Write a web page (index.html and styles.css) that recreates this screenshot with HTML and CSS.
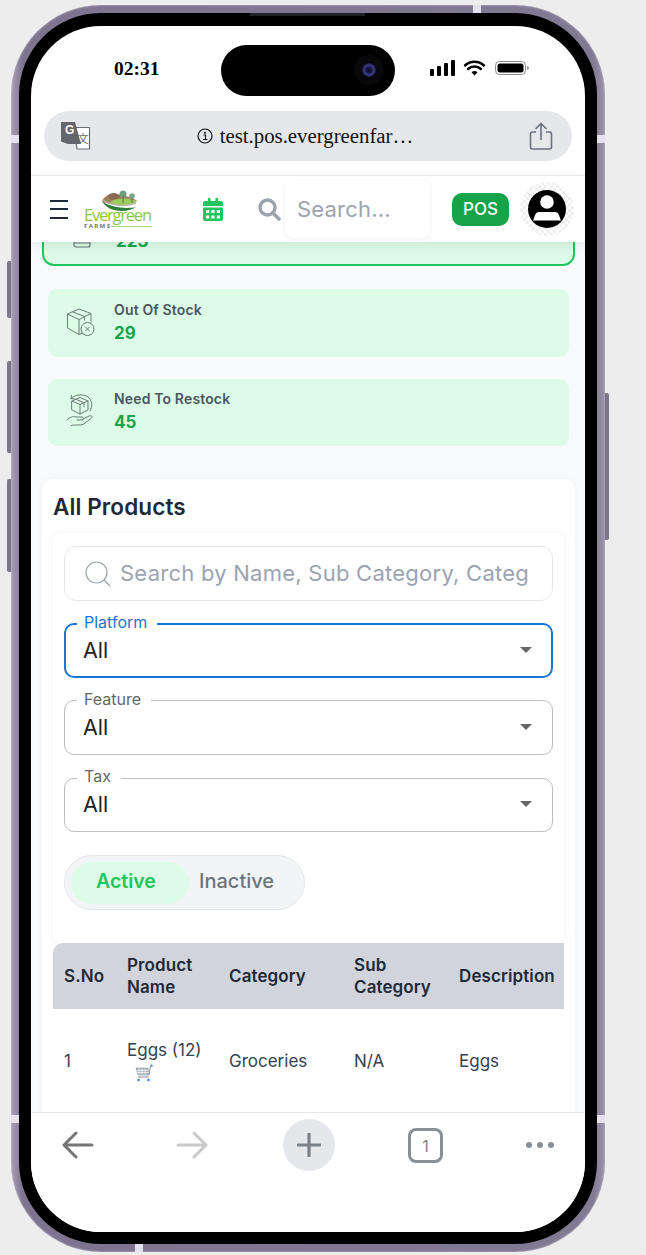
FILE: index.html
```html
<!DOCTYPE html>
<html lang="en">
<head>
    <meta charset="UTF-8">
    <title>All Products</title>
    <link rel="stylesheet" href="styles.css">
</head>
<body>
    <div class="phone">
        <span class="side-btn side-btn-a"></span>
        <span class="side-btn side-btn-b"></span>
        <span class="side-btn side-btn-c"></span>
        <span class="side-btn side-btn-d"></span>
        <span class="notch notch-lt"></span>
        <span class="notch notch-rt"></span>
        <span class="notch notch-lb"></span>
        <span class="notch notch-rb"></span>
        <span class="notch notch-top"></span>
        <span class="notch notch-bottom"></span>
        <div class="bezel">
            <span class="speaker"></span>
            <div class="screen">
                <div class="status-bar">
                    <span class="time">02:31</span>
                    <div class="island"><span class="camera"></span></div>
                    <svg class="status-icons" width="100" height="18" viewBox="0 0 100 18">
                        <rect x="0" y="10" width="4" height="7" rx="1" fill="#000"/>
                        <rect x="7" y="7" width="4" height="10" rx="1" fill="#000"/>
                        <rect x="14" y="4" width="4" height="13" rx="1" fill="#000"/>
                        <rect x="21" y="1" width="4" height="16" rx="1" fill="#000"/>
                        <path d="M35 6.500a14 14 0 0 1 19 0M38 10a9.500 9.500 0 0 1 13 0" fill="none" stroke="#000" stroke-width="2.400" stroke-linecap="round"/>
                        <path d="M41.500 13.200a4.600 4.600 0 0 1 6 0L44.500 16.500z" fill="#000"/>
                        <rect x="65.500" y="2.500" width="30" height="13" rx="4" fill="#fff" stroke="#8b8b8b"/>
                        <rect x="67.500" y="4.500" width="26" height="9" rx="2.500" fill="#000"/>
                        <path d="M97 7a2 2 0 0 1 0 4z" fill="#999"/>
                    </svg>
                </div>

                <div class="url-bar">
                    <svg class="translate-icon" width="30" height="28" viewBox="0 0 30 28">
                        <path d="M13 5.500h15.500V27H16z" fill="#fff" stroke="#6b6e74" stroke-width="1.200"/>
                        <path d="M0 0h14l6 22H7l-7-2.500z" fill="#63666b"/>
                        <text x="4" y="12" class="translate-g">G</text>
                        <text x="16.500" y="21" class="translate-zh">文</text>
                    </svg>
                    <div class="url-text">
                        <svg width="16" height="16" viewBox="0 0 16 16">
                            <circle cx="8" cy="8" r="7" fill="none" stroke="#111" stroke-width="1.200"/>
                            <path d="M6.500 7h2v4.500M6 11.500h4.500" fill="none" stroke="#111" stroke-width="1.200"/>
                            <circle cx="8" cy="4.700" r="1" fill="#111"/>
                        </svg>
                        <span>test.pos.evergreenfar…</span>
                    </div>
                    <svg class="share-icon" width="24" height="28" viewBox="0 0 24 28">
                        <path d="M7 10H3.500A2 2 0 0 0 1.500 12v13a2 2 0 0 0 2 2h17a2 2 0 0 0 2-2V12a2 2 0 0 0-2-2H17" fill="none" stroke="#6b7280" stroke-width="1.600"/>
                        <path d="M12 18V1.500M6.500 7L12 1.500 17.500 7" fill="none" stroke="#6b7280" stroke-width="1.600"/>
                    </svg>
                </div>

                <header class="topbar">
                    <div class="burger"><span></span><span></span><span></span></div>
                    <svg class="logo" width="70" height="40" viewBox="0 0 70 40">
                        <path d="M18 11C20 6 27 3 33 4c6 1 15 3 20 7-5 5-30 5-35 0z" fill="#a5805f"/>
                        <path d="M23 6c3-3 7-4 10-2l4 4-10 2z" fill="#8a6a52"/>
                        <path d="M26 12c8-5 18-4 27-1-6 5-21 6-27 1z" fill="#9ccb5c"/>
                        <path d="M18 11c3 6 10 10 20 10 6 0 11-2 14-4-8 2-26 1-34-6z" fill="#2f7d3a"/>
                        <path d="M19 10c8 6 24 7 33 3" fill="none" stroke="#b9b4aa" stroke-width="1.500"/>
                        <circle cx="39" cy="4" r="3.500" fill="#6f9c80"/>
                        <circle cx="48" cy="6" r="2.800" fill="#7aa88a"/>
                        <path d="M39 6v7M48 8v5" stroke="#5d6d4c"/>
                        <text x="0" y="31" class="logo-name" textLength="68">Evergreen</text>
                        <text x="0" y="37.500" class="logo-farms">FARMS</text>
                        <path d="M27 36.500h41" stroke="#a9d77c" stroke-width="1"/>
                    </svg>
                    <svg class="calendar" width="20" height="23" viewBox="0 0 20 23">
                        <path d="M5 0h2.500v3h5V0H15v3h3a2 2 0 0 1 2 2v3H0V5a2 2 0 0 1 2-2h3zM0 9.500h20V21a2 2 0 0 1-2 2H2a2 2 0 0 1-2-2z" fill="#22c55e"/>
                        <g fill="#fff">
                            <rect x="3" y="12" width="3.200" height="3"/><rect x="8.400" y="12" width="3.200" height="3"/><rect x="13.800" y="12" width="3.200" height="3"/>
                            <rect x="3" y="17.500" width="3.200" height="3"/><rect x="8.400" y="17.500" width="3.200" height="3"/><rect x="13.800" y="17.500" width="3.200" height="3"/>
                        </g>
                    </svg>
                    <svg class="search-glyph" width="23" height="23" viewBox="0 0 23 23">
                        <circle cx="9.500" cy="9.500" r="7.500" fill="none" stroke="#9ca3af" stroke-width="3.400"/>
                        <path d="M15 15l6 6" stroke="#9ca3af" stroke-width="3.600" stroke-linecap="round"/>
                    </svg>
                    <div class="top-search">Search...</div>
                    <button class="pos-btn">POS</button>
                    <div class="avatar">
                        <svg width="38" height="38" viewBox="0 0 38 38">
                            <circle cx="19" cy="19" r="19" fill="#000"/>
                            <circle cx="19" cy="12" r="6.800" fill="#fff"/>
                            <path d="M11 22h16c2 0 3 1 4 3l2 6H5l2-6c1-2 2-3 4-3z" fill="#fff"/>
                            <path d="M5 31h28" stroke="#000" stroke-width="1"/>
                        </svg>
                    </div>
                </header>

                <main class="content">
                    <div class="stat stat-selected">
                        <svg class="stat-icon" width="30" height="40" viewBox="0 0 30 40">
                            <rect x="6" y="17" width="16" height="20" rx="2" fill="none" stroke="#6b7280" stroke-width="1.200"/>
                            <path d="M6 33h16" stroke="#6b7280" stroke-width="1.200"/>
                        </svg>
                        <div class="stat-text">
                            <div class="stat-label">Total</div>
                            <div class="stat-value">223</div>
                        </div>
                    </div>
                    <div class="stat">
                        <svg class="stat-icon" width="30" height="30" viewBox="0 0 30 30">
                            <g fill="none" stroke="#6b7a74" stroke-width="1" stroke-linejoin="round">
                                <path d="M1.500 7L13 2l12 4.500v9M1.500 7v14L13 27.500l4-1.500M1.500 7L13 12.500 25 6.500M13 12.500v15M6.500 4.800l12 4.700v4"/>
                                <circle cx="21.500" cy="22" r="6.500"/>
                                <path d="M19.300 19.800l4.400 4.400M23.700 19.800l-4.400 4.400"/>
                            </g>
                        </svg>
                        <div class="stat-text">
                            <div class="stat-label">Out Of Stock</div>
                            <div class="stat-value">29</div>
                        </div>
                    </div>
                    <div class="stat">
                        <svg class="stat-icon" width="30" height="34" viewBox="0 0 30 34">
                            <g fill="none" stroke="#6b7a74" stroke-width="1" stroke-linejoin="round" stroke-linecap="round">
                                <path d="M5 4.500C9 .5 17-.5 22 3c4 3 5 9 2 14M5 4.500l.5-3M5 4.500l3.500.5"/>
                                <path d="M6 7l8-3.500L22 7v9l-8 4-8-4zM6 7l8 3.500L22 7M14 10.500V20M10 5.300l8 3.500v4"/>
                                <path d="M1 26c3-3 6-4 9-3h6c2 0 2 3 0 3h-5M16 25.500l7-3.500c3-1 4 1 2 2.500l-8 6c-3 1-9 0-12 1"/>
                            </g>
                        </svg>
                        <div class="stat-text">
                            <div class="stat-label">Need To Restock</div>
                            <div class="stat-value">45</div>
                        </div>
                    </div>

                    <section class="panel">
                        <h2 class="panel-title">All Products</h2>
                        <div class="filters">
                            <div class="search-field">
                                <svg width="26" height="26" viewBox="0 0 26 26">
                                    <circle cx="11.500" cy="11.500" r="10.500" fill="none" stroke="#9ca3af" stroke-width="1.200"/>
                                    <path d="M19 19l6 6" stroke="#9ca3af" stroke-width="1.200"/>
                                </svg>
                                <span class="search-placeholder">Search by Name, Sub Category, Category</span>
                            </div>
                            <div class="select select-focus">
                                <label class="select-label">Platform</label>
                                <span>All</span>
                                <i class="caret"></i>
                            </div>
                            <div class="select">
                                <label class="select-label">Feature</label>
                                <span>All</span>
                                <i class="caret"></i>
                            </div>
                            <div class="select select-tax">
                                <label class="select-label">Tax</label>
                                <span>All</span>
                                <i class="caret"></i>
                            </div>
                            <div class="toggle">
                                <span class="toggle-on">Active</span>
                                <span class="toggle-off">Inactive</span>
                            </div>
                        </div>
                        <table class="products">
                            <colgroup>
                                <col class="col-sno"><col class="col-name"><col class="col-cat"><col class="col-sub"><col class="col-desc">
                            </colgroup>
                            <thead>
                                <tr>
                                    <th>S.No</th>
                                    <th>Product Name</th>
                                    <th>Category</th>
                                    <th>Sub Category</th>
                                    <th>Description</th>
                                </tr>
                            </thead>
                            <tbody>
                                <tr>
                                    <td>1</td>
                                    <td>Eggs (12)
                                        <svg class="cart" width="18" height="18" viewBox="0 0 18 18">
                                            <path d="M1 4h12l1 7H3z" fill="#b4b9c0" stroke="#8d939b" stroke-width=".6"/>
                                            <path d="M4 4.500v6M7 4.500v6M10 4.500v6M1.500 6.500h12M2 8.500h12" stroke="#fff" stroke-width=".6"/>
                                            <path d="M14 11l1.500-9H18" fill="none" stroke="#8d939b"/>
                                            <path d="M3 13h11" stroke="#9aa0a8" stroke-width="1.200"/>
                                            <circle cx="3.500" cy="16" r="1.300" fill="#3b82f6"/>
                                            <circle cx="13.500" cy="16" r="1.300" fill="#3b82f6"/>
                                            <circle cx="16.500" cy="1.500" r="1" fill="#3b82f6"/>
                                        </svg>
                                    </td>
                                    <td>Groceries</td>
                                    <td>N/A</td>
                                    <td>Eggs</td>
                                </tr>
                            </tbody>
                        </table>
                    </section>
                </main>

                <nav class="browser-nav">
                    <svg width="32" height="28" viewBox="0 0 32 28">
                        <path d="M30 14H3M14 2L2 14l12 12" fill="none" stroke="#767676" stroke-width="3" stroke-linecap="round" stroke-linejoin="round"/>
                    </svg>
                    <svg width="32" height="28" viewBox="0 0 32 28">
                        <path d="M2 14h27M18 2l12 12-12 12" fill="none" stroke="#c9c9c9" stroke-width="3" stroke-linecap="round" stroke-linejoin="round"/>
                    </svg>
                    <div class="plus-btn">
                        <svg width="24" height="24" viewBox="0 0 24 24">
                            <path d="M12 1v22M1 12h22" stroke="#7c8087" stroke-width="3.200" stroke-linecap="round"/>
                        </svg>
                    </div>
                    <div class="tab-count">1</div>
                    <div class="more-dots"><span></span><span></span><span></span></div>
                </nav>
            </div>
        </div>
    </div>
</body>
</html>
```

FILE: styles.css
```css
body {
    margin: 0;
    height: 1255px;
    overflow: hidden;
    background: #ededed;
    font-family: Inter, "Liberation Sans", sans-serif;
}

/* device frame */
.phone {
    position: relative;
    width: 594px;
    height: 1247px;
    margin: 5px 0 0 11px;
    padding: 8px;
    box-sizing: border-box;
    border-radius: 90px;
    background: linear-gradient(90deg, #a79fb3, #7d7590 2%, #817a93 98%, #9a93a8);
    box-shadow: inset 0 0 2px #d5cfde;
}
.bezel {
    position: relative;
    height: 100%;
    padding: 13px 12px 12px;
    box-sizing: border-box;
    border-radius: 82px;
    background: #000;
}
.speaker {
    position: absolute;
    left: 231px;
    top: 0;
    width: 115px;
    height: 3px;
    background: #222;
}
.side-btn {
    position: absolute;
    left: -4px;
    width: 4px;
    background: #7d7589;
    border-radius: 2px 0 0 2px;
}
.side-btn-a { top: 256px; height: 57px; }
.side-btn-b { top: 356px; height: 92px; }
.side-btn-c { top: 474px; height: 93px; }
.side-btn-d { left: 594px; top: 388px; height: 147px; border-radius: 0 2px 2px 0; }
.notch {
    position: absolute;
    background: #e6e1ee;
}
.notch-lt, .notch-rt, .notch-lb, .notch-rb { width: 8px; height: 8px; }
.notch-lt { left: 0; top: 130px; }
.notch-rt { right: 0; top: 130px; }
.notch-lb { left: 0; top: 1110px; }
.notch-rb { right: 0; top: 1110px; }
.notch-top { left: 462px; top: 0; width: 8px; height: 8px; }
.notch-bottom { left: 124px; bottom: 0; width: 8px; height: 8px; }

.screen {
    display: flex;
    flex-direction: column;
    height: 1206px;
    overflow: hidden;
    border-radius: 70px;
    background: #fff;
}

/* ios status bar */
.status-bar {
    position: relative;
    flex: none;
    display: flex;
    align-items: center;
    height: 85px;
}
.time {
    margin: 0 0 0 83px;
    font-family: "Liberation Serif", serif;
    font-size: 19.500px;
    font-weight: bold;
    color: #000;
}
.island {
    position: absolute;
    left: 190px;
    top: 19px;
    width: 174px;
    height: 51px;
    border-radius: 26px;
    background: #000;
}
.camera {
    position: absolute;
    left: 141px;
    top: 18px;
    width: 14px;
    height: 14px;
    border-radius: 50%;
    background: radial-gradient(circle, #10102a 20%, #3a3a8a 50%, #15152c 75%, #0a0a10);
    box-shadow: 0 0 0 8px #08080a;
}
.status-icons {
    margin-left: auto;
    margin-right: 55px;
    margin-bottom: 1px;
}

/* browser url bar */
.url-bar {
    flex: none;
    display: flex;
    align-items: center;
    height: 50px;
    margin: 0 13px;
    padding: 0 19px 0 17px;
    border-radius: 25px;
    background: #e5e7eb;
}
.translate-g { font: bold 12px "Liberation Sans", sans-serif; fill: #fff; }
.translate-zh { font: 11px "Noto Sans CJK SC", sans-serif; fill: #63666b; }
.url-text {
    flex: 1;
    display: flex;
    align-items: center;
    justify-content: center;
    gap: 7px;
    padding-right: 10px;
    font-family: "Liberation Serif", serif;
    font-size: 20.800px;
    color: #111;
}

.topbar {
    position: relative;
    z-index: 2;
    flex: none;
    display: flex;
    align-items: center;
    height: 66px;
    margin-top: 14px;
    border-top: 1px solid #e5e7eb;
    background: #fff;
    box-shadow: 0 4px 12px rgba(0, 0, 0, 0.08);
}
.burger {
    display: flex;
    flex-direction: column;
    gap: 6.500px;
    width: 18px;
    margin-left: 19px;
}
.burger span {
    height: 2px;
    background: #1f2937;
}
.logo { margin-left: 16px; margin-top: 2px; overflow: visible; }
.logo-name { font: 400 16.500px "Open Sans", sans-serif; fill: #8cc63f; }
.logo-farms { font: bold 6px "Open Sans", sans-serif; fill: #6b7280; letter-spacing: 1.400px; }
.calendar { margin-left: 49px; }
.search-glyph { margin-left: 35px; }
.top-search {
    width: 133px;
    height: 57px;
    margin-left: 4px;
    padding-left: 12px;
    line-height: 57px;
    border-radius: 8px;
    box-shadow: 0 1px 5px rgba(0, 0, 0, 0.07);
    font-size: 22px;
    letter-spacing: 0.200px;
    color: #9ca3af;
}
.pos-btn {
    width: 57px;
    height: 33px;
    margin-left: 22px;
    padding: 0;
    border: 0;
    border-radius: 10px;
    background: #16a34a;
    font-family: inherit;
    font-size: 17px;
    font-weight: 500;
    color: #fff;
}
.avatar {
    display: flex;
    align-items: center;
    justify-content: center;
    width: 54px;
    height: 54px;
    margin-left: 11px;
    border-radius: 50%;
    background: repeating-conic-gradient(#efefef 0 25%, #fff 0 50%) 0 0 / 6px 6px;
}

/* page body */
.content {
    flex: 1;
    min-height: 0;
    overflow: hidden;
    padding: 0 10px 0 11px;
    background: #f9fafb;
}
.stat {
    display: flex;
    align-items: center;
    height: 67.500px;
    margin: 22px 6px 0;
    padding: 0 0 2px 18px;
    box-sizing: border-box;
    border-radius: 9px;
    background: #dcfce7;
}
.stat-selected {
    height: 68px;
    margin: -44px 0 0;
    padding: 0 0 4px 24px;
    border: 2px solid #22c55e;
    border-radius: 12px;
}
.stat-selected + .stat { margin-top: 23px; }
.stat-icon { flex: none; }
.stat-text { margin-left: 18px; }
.stat-label {
    font-size: 14px;
    font-weight: 600;
    line-height: 20px;
    letter-spacing: 0.150px;
    color: #4b5563;
}
.stat-value {
    margin-top: 2px;
    font-size: 17px;
    font-weight: 700;
    line-height: 22px;
    color: #16a34a;
}

.panel {
    margin-top: 33px;
    padding: 11px;
    border-radius: 10px;
    background: #fff;
    box-shadow: 0 0 6px rgba(0, 0, 0, 0.04);
}
.panel-title {
    margin: 0 0 10px;
    font-size: 22.500px;
    font-weight: 600;
    line-height: 33px;
    letter-spacing: 0.100px;
    color: #1f2937;
}
.filters {
    padding: 13px 11px 33px;
    border-radius: 8px;
    background: #fff;
    box-shadow: 0 0 8px rgba(0, 0, 0, 0.06);
}
.search-field {
    display: flex;
    align-items: center;
    gap: 9px;
    height: 55px;
    padding-left: 20px;
    box-sizing: border-box;
    overflow: hidden;
    border: 1px solid #e5e7eb;
    border-radius: 12px;
}
.search-field svg { flex: none; }
.search-placeholder {
    flex: none;
    width: 408px;
    padding-bottom: 2px;
    overflow: hidden;
    white-space: nowrap;
    font-size: 22px;
    letter-spacing: 0.250px;
    color: #9ca3af;
}
.select {
    position: relative;
    display: flex;
    align-items: center;
    height: 55px;
    margin-top: 22px;
    padding: 0 19px 2px 18px;
    box-sizing: border-box;
    border: 1px solid #bdbdbd;
    border-radius: 10px;
    font-size: 21.500px;
    color: #222;
}
.select-focus {
    padding: 0 18px 2px 17px;
    border: 2px solid #1976d2;
}
.select-tax {
    height: 54px;
    margin-top: 23px;
}
.select-label {
    position: absolute;
    left: 12px;
    top: -12px;
    padding: 0 10px 0 7px;
    background: #fff;
    font-size: 16px;
    line-height: 20px;
    color: #666;
}
.select-focus .select-label {
    left: 11px;
    top: -13px;
    color: #1976d2;
}
.select-tax .select-label { top: -13px; }
.caret {
    margin-left: auto;
    margin-right: 1px;
    border-top: 6px solid #666;
    border-left: 6.500px solid transparent;
    border-right: 6.500px solid transparent;
}
.toggle {
    display: flex;
    align-items: center;
    width: 241px;
    height: 55px;
    margin-top: 23px;
    padding-left: 6px;
    box-sizing: border-box;
    border: 1px solid #e5e7eb;
    border-radius: 28px;
    background: #f3f4f6;
    font-size: 20px;
}
.toggle-on {
    width: 93px;
    height: 42px;
    padding-left: 25px;
    border-radius: 21px;
    background: #dcfce7;
    font-size: 19.500px;
    font-weight: 600;
    line-height: 39px;
    color: #22c55e;
}
.toggle-off {
    margin-left: 10px;
    padding-bottom: 3px;
    font-weight: 500;
    color: #6b7280;
}

.products {
    width: 511px;
    table-layout: fixed;
    border-collapse: collapse;
    font-size: 17px;
    line-height: 22px;
}
.col-sno { width: 63px; }
.col-name { width: 102px; }
.col-cat { width: 125px; }
.col-sub { width: 105px; }
.col-desc { width: 116px; }
.products th {
    height: 66px;
    padding: 0 0 0 11px;
    background: #d1d5db;
    font-weight: 600;
    text-align: left;
    letter-spacing: 0.100px;
    color: #1f2937;
}
.products th:first-child { border-top-left-radius: 10px; }
.products td {
    height: 103px;
    padding: 0 0 0 11px;
    color: #374151;
}
.cart {
    display: block;
    margin: 3px 0 0 8px;
}

/* browser bottom bar */
.browser-nav {
    position: relative;
    z-index: 2;
    flex: none;
    display: flex;
    align-items: flex-start;
    height: 120px;
    padding: 6px 0 0 31px;
    box-sizing: border-box;
    border-top: 1px solid #e5e7eb;
    background: #fff;
}
.browser-nav > svg:first-child { margin-top: 12px; }
.browser-nav > svg:nth-child(2) { margin-top: 12px; margin-left: 82px; }
.plus-btn {
    display: flex;
    align-items: center;
    justify-content: center;
    width: 52px;
    height: 52px;
    margin-left: 75px;
    border-radius: 50%;
    background: #e5e7eb;
}
.tab-count {
    width: 35px;
    height: 35px;
    margin: 9px 0 0 73px;
    box-sizing: border-box;
    border: 3px solid #8a8f96;
    border-radius: 8px;
    font-size: 16px;
    line-height: 30px;
    text-align: center;
    color: #7c8087;
}
.more-dots {
    display: flex;
    gap: 5px;
    margin: 23px 0 0 83px;
}
.more-dots span {
    width: 6px;
    height: 6px;
    border-radius: 50%;
    background: #8a8f96;
}
```
